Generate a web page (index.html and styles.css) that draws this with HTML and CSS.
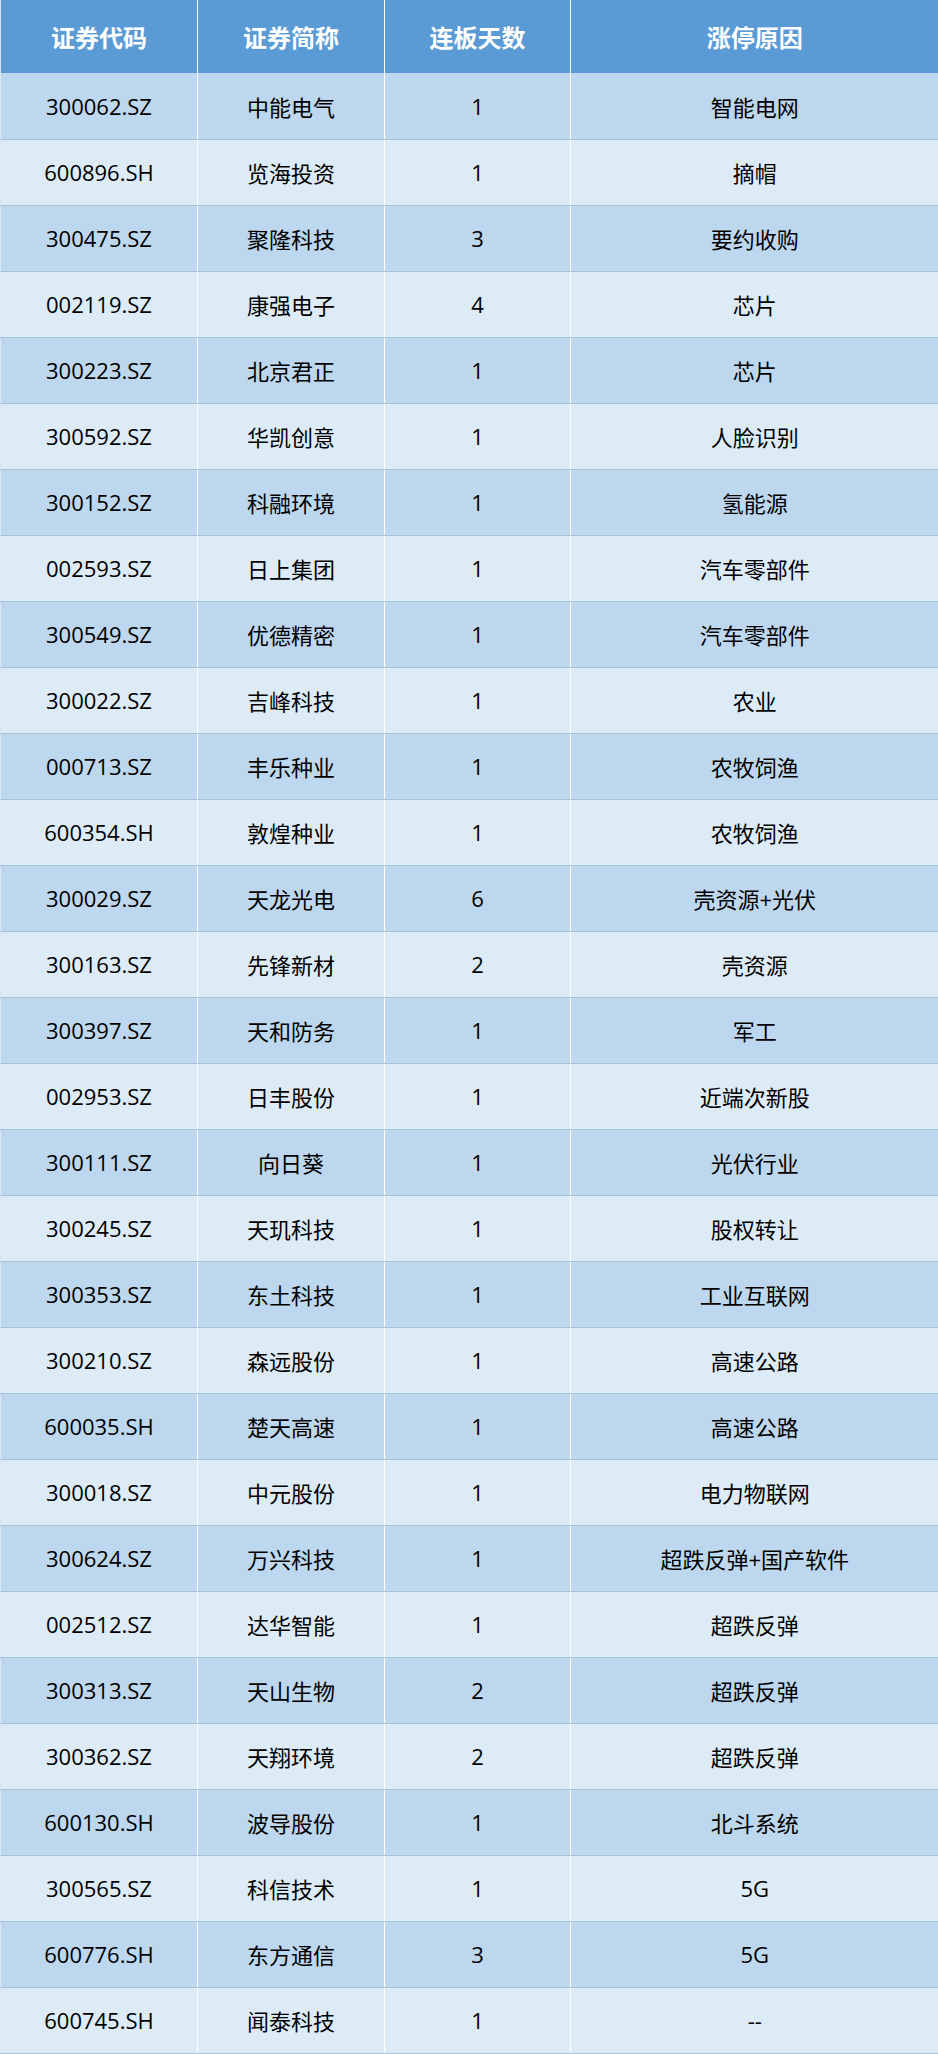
FILE: index.html
```html
<!DOCTYPE html>
<html lang="zh-CN">
<head>
<meta charset="utf-8">
<title>涨停原因</title>
<link rel="stylesheet" href="styles.css">
</head>
<body>
<table class="grid">
<colgroup><col class="c1"><col class="c2"><col class="c3"><col class="c4"></colgroup>
<thead>
<tr><th>证券代码</th><th>证券简称</th><th>连板天数</th><th>涨停原因</th></tr>
</thead>
<tbody>
<tr><td>300062.SZ</td><td>中能电气</td><td>1</td><td>智能电网</td></tr>
<tr><td>600896.SH</td><td>览海投资</td><td>1</td><td>摘帽</td></tr>
<tr><td>300475.SZ</td><td>聚隆科技</td><td>3</td><td>要约收购</td></tr>
<tr><td>002119.SZ</td><td>康强电子</td><td>4</td><td>芯片</td></tr>
<tr><td>300223.SZ</td><td>北京君正</td><td>1</td><td>芯片</td></tr>
<tr><td>300592.SZ</td><td>华凯创意</td><td>1</td><td>人脸识别</td></tr>
<tr><td>300152.SZ</td><td>科融环境</td><td>1</td><td>氢能源</td></tr>
<tr><td>002593.SZ</td><td>日上集团</td><td>1</td><td>汽车零部件</td></tr>
<tr><td>300549.SZ</td><td>优德精密</td><td>1</td><td>汽车零部件</td></tr>
<tr><td>300022.SZ</td><td>吉峰科技</td><td>1</td><td>农业</td></tr>
<tr><td>000713.SZ</td><td>丰乐种业</td><td>1</td><td>农牧饲渔</td></tr>
<tr><td>600354.SH</td><td>敦煌种业</td><td>1</td><td>农牧饲渔</td></tr>
<tr><td>300029.SZ</td><td>天龙光电</td><td>6</td><td>壳资源+光伏</td></tr>
<tr><td>300163.SZ</td><td>先锋新材</td><td>2</td><td>壳资源</td></tr>
<tr><td>300397.SZ</td><td>天和防务</td><td>1</td><td>军工</td></tr>
<tr><td>002953.SZ</td><td>日丰股份</td><td>1</td><td>近端次新股</td></tr>
<tr><td>300111.SZ</td><td>向日葵</td><td>1</td><td>光伏行业</td></tr>
<tr><td>300245.SZ</td><td>天玑科技</td><td>1</td><td>股权转让</td></tr>
<tr><td>300353.SZ</td><td>东土科技</td><td>1</td><td>工业互联网</td></tr>
<tr><td>300210.SZ</td><td>森远股份</td><td>1</td><td>高速公路</td></tr>
<tr><td>600035.SH</td><td>楚天高速</td><td>1</td><td>高速公路</td></tr>
<tr><td>300018.SZ</td><td>中元股份</td><td>1</td><td>电力物联网</td></tr>
<tr><td>300624.SZ</td><td>万兴科技</td><td>1</td><td>超跌反弹+国产软件</td></tr>
<tr><td>002512.SZ</td><td>达华智能</td><td>1</td><td>超跌反弹</td></tr>
<tr><td>300313.SZ</td><td>天山生物</td><td>2</td><td>超跌反弹</td></tr>
<tr><td>300362.SZ</td><td>天翔环境</td><td>2</td><td>超跌反弹</td></tr>
<tr><td>600130.SH</td><td>波导股份</td><td>1</td><td>北斗系统</td></tr>
<tr><td>300565.SZ</td><td>科信技术</td><td>1</td><td>5G</td></tr>
<tr><td>600776.SH</td><td>东方通信</td><td>3</td><td>5G</td></tr>
<tr><td>600745.SH</td><td>闻泰科技</td><td>1</td><td>--</td></tr>
</tbody>
</table>
</body>
</html>
```
FILE: styles.css
```css
html, body {
  margin: 0;
  padding: 0;
  background: #ffffff;
}
.grid {
  width: 938px;
  border-collapse: collapse;
  table-layout: fixed;
  font-family: "Open Sans", "Noto Sans CJK SC", sans-serif;
  color: #000000;
}
.c1 { width: 197px; }
.c2 { width: 187px; }
.c3 { width: 186px; }
.c4 { width: 368px; }
.grid th {
  height: 73px;
  padding: 0;
  background: #5b9bd5;
  color: #ffffff;
  font-family: "Noto Sans CJK SC", sans-serif;
  font-weight: 700;
  font-size: 24px;
  text-align: center;
  vertical-align: middle;
  border-left: 1px solid #ffffff;
  border-right: 1px solid #ffffff;
  box-sizing: border-box;
}
.grid td {
  height: 66px;
  padding: 0;
  font-size: 22px;
  text-align: center;
  vertical-align: middle;
  border-left: 1px solid #ffffff;
  border-right: 1px solid #ffffff;
  border-bottom: 1px solid #a9c3db;
  box-sizing: border-box;
}
.grid th:first-child, .grid td:first-child { border-left: 1px solid #dbe8f4; }
.grid th:last-child, .grid td:last-child { border-right: 0; }
.grid tbody tr:nth-child(odd) td { background: #bdd7ee; }
.grid tbody tr:nth-child(even) td { background: #ddebf7; }
```
